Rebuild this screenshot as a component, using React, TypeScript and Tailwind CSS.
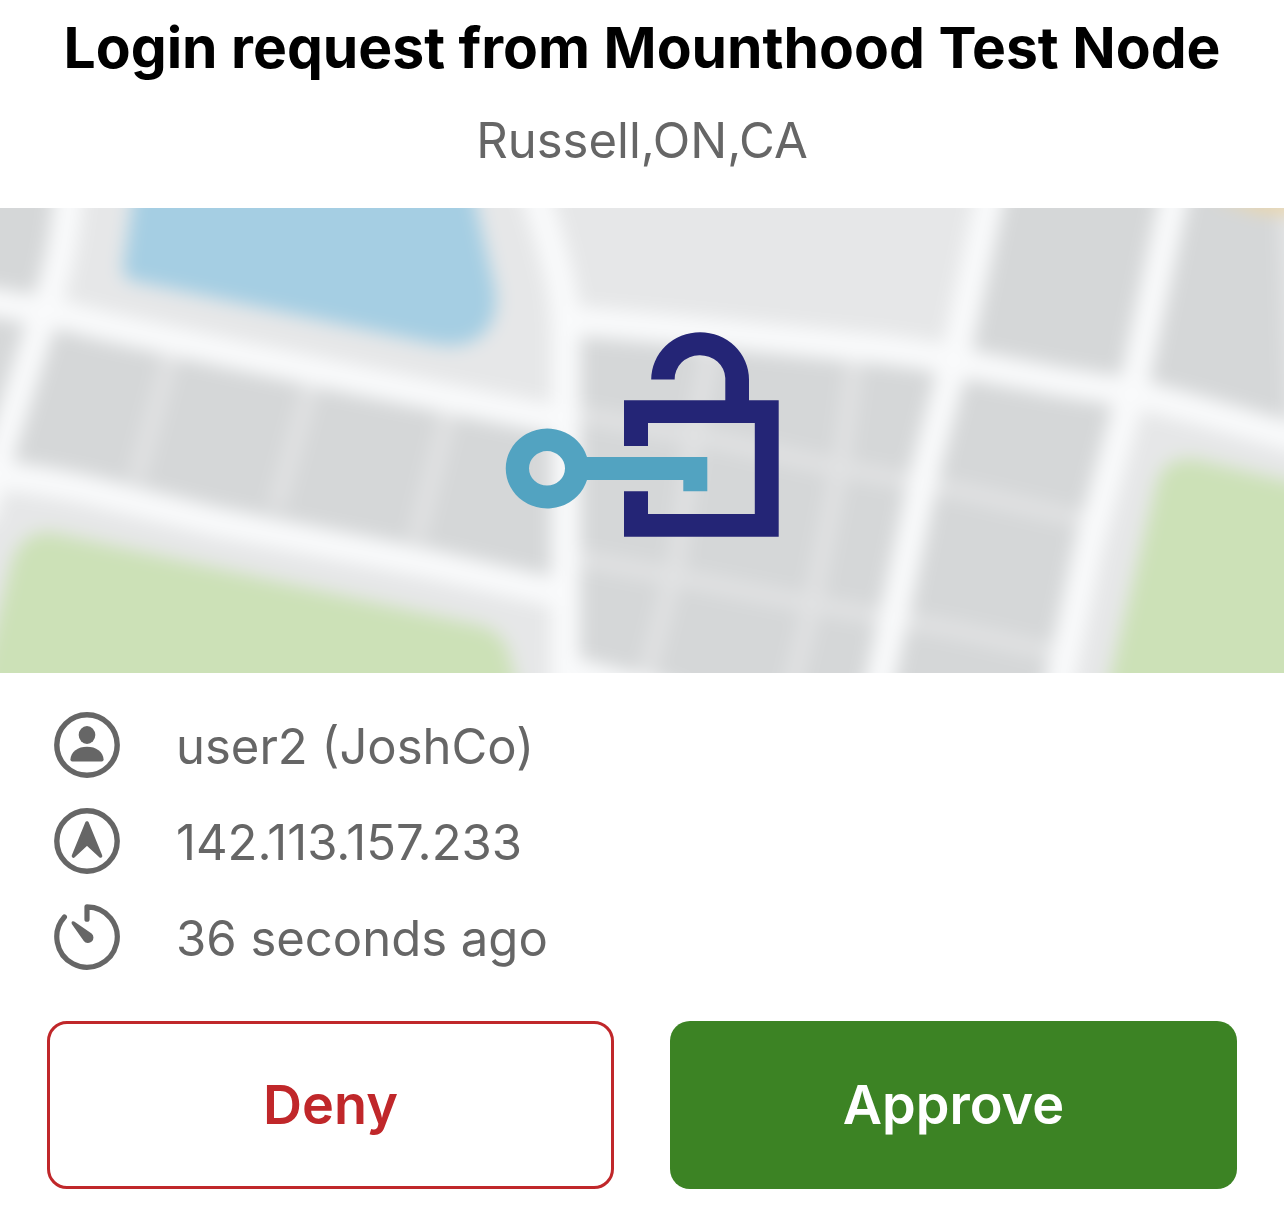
import type { ReactNode } from "react";

const WATER =
  "M136 180 L123 268 Q122 278 134 281 L430 343 Q470 352 488 328 Q500 310 494 284 L470 180 Z";
const PARK_LEFT = "M-40 760 L8 575 Q18 527 55 533 L478 625 Q500 630 508 650 L536 760 Z";
const PARK_RIGHT = "M1090 760 L1156 486 Q1163 456 1195 459 L1340 494 L1340 760 Z";

const BLOCKS = [
  "M-40 160 L70 160 L45 310 L-40 296 Z",
  "M-40 296 L45 310 L0 470 L-40 466 Z",
  "M45 310 L233 351 L566 420 L566 592 L430 560 L217 518 L0 475 Z",
  "M566 318 L847 345 L956 360 L1133 392 L1089 533 L1040 760 L566 760 Z",
  "M1000 160 L1278 160 L1288 440 L1133 392 L956 360 Z",
];

const LANES = [
  "M172 350 L136 480",
  "M312 380 L276 508",
  "M449 410 L416 540",
  "M712 340 L693 440 L677 560 L640 700",
  "M856 350 L843 450 L813 600 L786 710",
  "M566 412 L703 437 L830 466 L956 490 L1090 521",
  "M566 556 L677 577 L807 603 L956 630 L1070 656",
];

const ROADS = [
  "M72 160 C66 240 58 270 45 310 L4 440 L-20 520",
  "M-40 298 Q40 308 100 325 L233 354 L367 382 L566 422",
  "M-40 470 Q50 480 100 493 L217 522 L430 564 L566 595",
  "M524 160 Q550 235 560 280 Q567 310 566 367 L565 760",
  "M566 320 L713 333 L847 346 Q920 352 956 362 L1056 381 L1133 393 Q1210 412 1340 452",
  "M998 160 L956 355 L926 467 L865 750",
  "M1182 160 L1136 375 L1089 545 L1045 750",
  "M566 670 L680 700",
];

function MapBanner() {
  return (
    <svg viewBox="0 208 1284 465" className="block w-full" role="img" aria-label="Map">
      <defs>
        <filter id="soften" filterUnits="userSpaceOnUse" x="-60" y="140" width="1404" height="640" colorInterpolationFilters="sRGB">
          <feGaussianBlur stdDeviation="9" />
        </filter>
      </defs>
      <g filter="url(#soften)" fill="none">
        <rect x="-60" y="140" width="1404" height="640" fill="#e6e7e8" />
        {BLOCKS.map((d) => (
          <path key={d} d={d} fill="#d5d7d8" />
        ))}
        <path d="M1210 196 L1340 196 L1340 216 L1260 212 Z" fill="#ecd6a8" />
        <path d={WATER} fill="#a5cee3" />
        <path d={PARK_LEFT} fill="#cce1b7" />
        <path d={PARK_RIGHT} fill="#cce1b7" />
        {LANES.map((d) => (
          <path key={d} d={d} stroke="#e1e2e3" strokeWidth="17" />
        ))}
        {ROADS.map((d) => (
          <path key={d} d={d} stroke="#f9fafb" strokeWidth="29" />
        ))}
      </g>

      <path
        fill="#242576"
        d="M624 400.3 H725.3 V378 A25.3 23.6 0 0 0 674.7 379.5 H651.2 A48.9 47.4 0 0 1 749 379.5 V400.3 H778.7 V536.7 H624 V491.2 H648 V514 H754.8 V423 H648 V446 H624 Z"
      />
      <path
        fill="#52a3c1"
        fillRule="evenodd"
        d="M587 457 H707.3 V491.2 H683.3 V480 H587 A41.5 40 0 1 1 587 457 Z M529 468.3 A18 17.2 0 1 0 565 468.3 A18 17.2 0 1 0 529 468.3 Z"
      />
    </svg>
  );
}

const iconClass = "size-[66px] shrink-0";

function UserIcon() {
  return (
    <svg viewBox="0 0 66 66" className={iconClass} fill="currentColor" aria-hidden="true">
      <circle cx="33" cy="33" r="30.2" fill="none" stroke="currentColor" strokeWidth="5.4" />
      <ellipse cx="33" cy="23" rx="8.3" ry="9" />
      <path d="M16.4 47.4 C16.8 39.5 24 34.7 33 34.7 C42 34.7 49.2 39.5 49.6 47.4 Q49.6 49.4 47.6 49.4 H18.4 Q16.4 49.4 16.4 47.4 Z" />
    </svg>
  );
}

function LocationIcon() {
  return (
    <svg viewBox="0 0 66 66" className={iconClass} fill="currentColor" aria-hidden="true">
      <circle cx="33" cy="33" r="30.2" fill="none" stroke="currentColor" strokeWidth="5.4" />
      <path
        d="M33 15 L46.5 48 L33 35.4 L19.5 48 Z"
        stroke="currentColor"
        strokeWidth="3.6"
        strokeLinejoin="round"
      />
    </svg>
  );
}

function TimerIcon() {
  return (
    <svg viewBox="0 0 66 66" className={iconClass} fill="currentColor" aria-hidden="true">
      <path
        d="M33 15.2 V2.8 A30.2 30.2 0 1 1 10.4 13"
        fill="none"
        stroke="currentColor"
        strokeWidth="5.2"
        strokeLinecap="round"
        strokeLinejoin="round"
      />
      <path d="M20.2 17.6 L37.6 29.6 A5.4 5.4 0 1 1 29.8 37 L17.8 20 Q16.8 16.6 20.2 17.6 Z" />
    </svg>
  );
}

interface DetailProps {
  icon: ReactNode;
  children: ReactNode;
}

function Detail({ icon, children }: DetailProps) {
  return (
    <li className="flex items-center gap-14">
      {icon}
      <span className="pt-1 leading-[62px]">{children}</span>
    </li>
  );
}

export default function App() {
  return (
    <main className="min-h-screen bg-white font-['Inter',sans-serif] text-[49px] leading-[66px] text-[#666666]">
      <header className="px-8 pt-3 pb-[34px] text-center">
        <h1 className="text-[57px] leading-[72px] font-bold text-black">
          Login request from Mounthood Test Node
        </h1>
        <p className="pt-6">Russell,ON,CA</p>
      </header>

      <MapBanner />

      <ul className="flex flex-col gap-[30px] px-[54px] pt-[39px]">
        <Detail icon={<UserIcon />}>user2 (JoshCo)</Detail>
        <Detail icon={<LocationIcon />}>142.113.157.233</Detail>
        <Detail icon={<TimerIcon />}>36 seconds ago</Detail>
      </ul>

      <div className="grid grid-cols-2 gap-14 px-[47px] pt-[51px] pb-[38px] text-[54px] font-semibold">
        <button
          type="button"
          className="h-[168px] cursor-pointer rounded-[20px] border-3 border-[#c0272a] text-[#c0272a]"
        >
          Deny
        </button>
        <button
          type="button"
          className="h-[168px] cursor-pointer rounded-[20px] bg-[#3c8324] text-white"
        >
          Approve
        </button>
      </div>
    </main>
  );
}
